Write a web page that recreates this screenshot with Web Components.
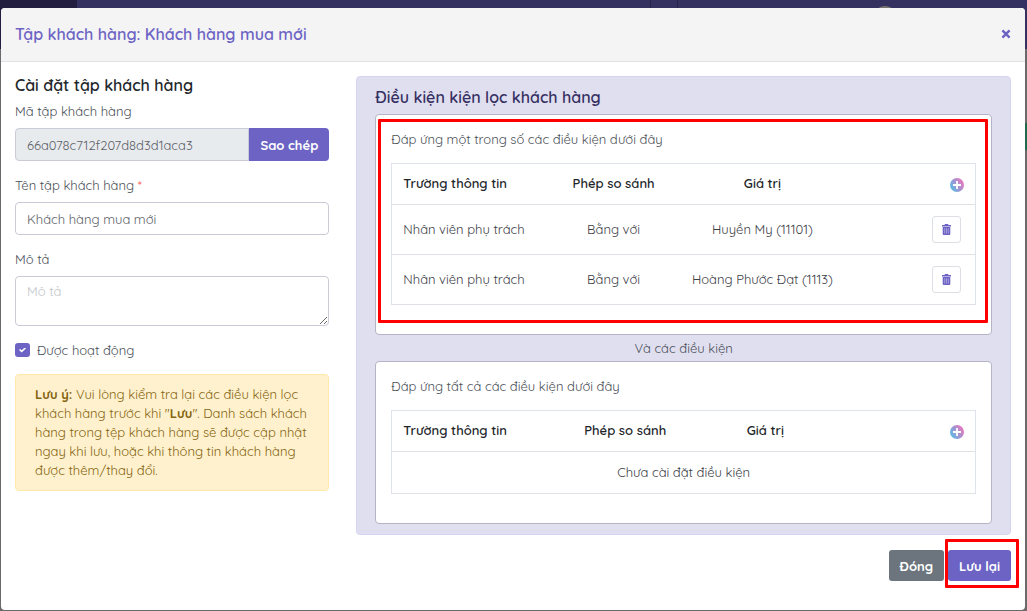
<!DOCTYPE html>
<html lang="vi">
<head>
<meta charset="utf-8">
<meta name="viewport" content="width=device-width, initial-scale=1">
<title>Tập khách hàng: Khách hàng mua mới</title>
<style>
  :root {
    --font: Quicksand, Inter, "Noto Sans", sans-serif;
    --primary: #6c63c4;
    --text: #4a4f57;
    --border: #c9cbd6;
    --mark: #ff0000;
  }
  body { margin: 0; font: 400 13px/20px var(--font); color: var(--text); }
</style>
</head>
<body>
<page-backdrop>
  <customer-dialog heading="Tập khách hàng: Khách hàng mua mới">
    <segment-settings slot="settings"></segment-settings>
    <filter-panel slot="filters" heading="Điều kiện kiện lọc khách hàng">
      <condition-group marked layout="27,22,29,22"
        heading="Đáp ứng một trong số các điều kiện dưới đây"
        rows="Nhân viên phụ trách|Bằng với|Huyền My (11101);Nhân viên phụ trách|Bằng với|Hoàng Phước Đạt (1113)"></condition-group>
      <p>Và các điều kiện</p>
      <condition-group layout="28,24,24,24"
        heading="Đáp ứng tất cả các điều kiện dưới đây"></condition-group>
    </filter-panel>
    <action-button slot="actions" tone="muted">Đóng</action-button>
    <action-button slot="actions" marked>Lưu lại</action-button>
  </customer-dialog>
</page-backdrop>

<script>
const define = (name, html, setup) => {
  const template = document.createElement('template');
  template.innerHTML = html;
  customElements.define(name, class extends HTMLElement {
    constructor() {
      super();
      this.attachShadow({ mode: 'open' }).append(template.content.cloneNode(true));
    }
    connectedCallback() {
      if (setup && !this.ready) { this.ready = true; setup(this, this.shadowRoot); }
    }
  });
};

// Dimmed page behind the dialog
define('page-backdrop', `
  <style>
    :host {
      display: block; box-sizing: border-box; min-height: 100vh; padding: 8px 2px 1px 1px;
      position: relative; overflow: hidden;
      background:
        linear-gradient(#1d6b4a, #1d6b4a) right 0 top 123px / 3px 27px no-repeat,
        linear-gradient(#26234a, #26234a) 650px 0 / 1px 8px no-repeat,
        linear-gradient(#26234a, #26234a) 677px 0 / 1px 8px no-repeat,
        linear-gradient(#211e40, #211e40) 0 0 / 77px 49px no-repeat,
        linear-gradient(#343060, #343060) 0 0 / 100% 49px no-repeat,
        #6a6a6c;
    }
    i {
      position: absolute; top: 6px; right: 131px; width: 22px; height: 22px;
      border-radius: 50%; background: #77716f;
    }
  </style>
  <i></i><slot></slot>`);

define('customer-dialog', `
  <style>
    :host { display: block; position: relative; }
    section {
      box-sizing: border-box; min-height: calc(100vh - 9px); background: #fff;
      border-radius: 4px; overflow: hidden;
    }
    header {
      display: flex; align-items: center; justify-content: space-between;
      padding: 14px 14px 15px; background: #f4f4f4; border-bottom: 1px solid #dfe1e4;
    }
    h1 { margin: 0; font-size: 16px; line-height: 24px; font-weight: 600; color: var(--primary); }
    .close {
      display: flex; padding: 0; border: 0; background: none; color: var(--primary);
      width: 10px; height: 10px;
    }
    .columns { display: grid; grid-template-columns: minmax(0, 1fr) minmax(0, 2fr); }
    .columns > div { padding: 14px; }
    .columns > div:first-child { padding-right: 13px; }
    footer { display: flex; justify-content: flex-end; gap: 4px; padding: 1px 14px 28px; }
  </style>
  <section role="dialog" aria-labelledby="title">
    <header>
      <h1 id="title"></h1>
      <button class="close" aria-label="Đóng hộp thoại">
        <svg width="10" height="10" viewBox="0 0 10 10" stroke="currentColor" stroke-width="2.4"><path d="M1.4 1.4 8.6 8.6M8.6 1.4 1.4 8.6"/></svg>
      </button>
    </header>
    <div class="columns">
      <div><slot name="settings"></slot></div>
      <div><slot name="filters"></slot></div>
    </div>
    <footer><slot name="actions"></slot></footer>
  </section>`,
  (el, root) => { root.querySelector('h1').textContent = el.getAttribute('heading'); });

define('segment-settings', `
  <style>
    :host { display: block; }
    h2 { margin: 0 0 7px; font-size: 16px; line-height: 18px; font-weight: 600; color: #23272b; }
    label { display: block; }
    b.req { color: #f66; font-weight: 400; }
    .field { display: flex; margin: 7px 0 14px; }
    input[type=text], textarea {
      box-sizing: border-box; flex: 1; min-width: 0; height: 33px; padding: 6px 11px; margin: 0;
      border: 1px solid var(--border); border-radius: 4px; background: #fff;
      font: inherit; color: #5d6168; outline: 0;
    }
    input[readonly] { background: #e8ebee; border-radius: 4px 0 0 4px; }
    textarea { height: 50px; padding-top: 4px; resize: vertical; }
    textarea::placeholder { color: #c3c5c9; }
    .field button {
      padding: 0 11px; border: 0; border-radius: 0 4px 4px 0;
      background: var(--primary); color: #fff; font: inherit; font-weight: 700;
    }
    .check { display: flex; align-items: center; gap: 7px; }
    .check input {
      appearance: none; display: grid; place-items: center; width: 15px; height: 14px; margin: 0;
      border-radius: 3px; background: var(--primary);
    }
    .check input::after {
      content: ""; width: 7px; height: 5px; background: #fff;
      clip-path: polygon(0 50%, 16% 28%, 38% 54%, 84% 0, 100% 18%, 38% 100%);
    }
    .note {
      margin: 14px 0 0; padding: 10px 19px; border: 1px solid #ffe8a8; border-radius: 4px;
      background: #fff1cd; color: #856411; line-height: 19px;
    }
    .note b { font-weight: 700; }
  </style>
  <h2>Cài đặt tập khách hàng</h2>
  <label for="code">Mã tập khách hàng</label>
  <div class="field"><input id="code" type="text" readonly value="66a078c712f207d8d3d1aca3"><button>Sao chép</button></div>
  <label for="name">Tên tập khách hàng <b class="req">*</b></label>
  <div class="field"><input id="name" type="text" value="Khách hàng mua mới"></div>
  <label for="description">Mô tả</label>
  <div class="field"><textarea id="description" placeholder="Mô tả"></textarea></div>
  <label class="check"><input type="checkbox" checked>Được hoạt động</label>
  <p class="note"><b>Lưu ý:</b> Vui lòng kiểm tra lại các điều kiện lọc khách hàng trước khi "<b>Lưu</b>". Danh sách khách hàng trong tệp khách hàng sẽ được cập nhật ngay khi lưu, hoặc khi thông tin khách hàng được thêm/thay đổi.</p>`);

define('filter-panel', `
  <style>
    :host {
      display: block; padding: 10px 18px; border: 1px solid #d6d3f3; border-radius: 4px;
      background: #e0dff0;
    }
    h2 { margin: 0 0 7px; font-size: 16px; line-height: 20px; font-weight: 600; color: #363062; }
    ::slotted(p) { margin: 3px 0; text-align: center; }
  </style>
  <h2></h2><slot></slot>`,
  (el, root) => { root.querySelector('h2').textContent = el.getAttribute('heading'); });

// One card of conditions: intro text plus a table
define('condition-group', `
  <style>
    :host {
      display: block; position: relative; padding: 14px 15px 29px;
      border: 1px solid #b5b3c6; border-radius: 4px; background: #fff;
    }
    :host([marked])::after {
      content: ""; position: absolute; inset: 4px 3px 11px 2px;
      border: 3px solid var(--mark); border-radius: 1px; pointer-events: none;
    }
    p { margin: 0 0 14px; }
    table {
      width: 100%; table-layout: fixed; border-collapse: collapse;
      border: 1px solid #dfe4ec; color: #3c4047;
    }
    th, td { box-sizing: border-box; height: 50px; padding: 0 11px 2px; text-align: center; border-bottom: 1px solid #dfe1e6; }
    th { height: 41px; font-weight: 600; color: #212529; }
    td { white-space: nowrap; }
    .empty { height: 42px; }
    th:first-child, td:first-child:not(.empty) { text-align: left; }
    th:last-child, td:last-child:not(.empty) { text-align: right; }
    td:last-child:not(.empty) { padding: 0 14px 0 0; }
    button { padding: 0; vertical-align: middle; }
    .add { border: 0; background: none; height: 14px; display: inline-flex; }
    .remove {
      display: inline-flex; align-items: center; justify-content: center;
      width: 29px; height: 27px;
      border: 1px solid #dcdfe4; border-radius: 3px; background: #fff; color: var(--primary);
    }
  </style>
  <p></p>
  <table>
    <colgroup></colgroup>
    <thead><tr><th>Trường thông tin</th><th>Phép so sánh</th><th>Giá trị</th><th>
      <button class="add" aria-label="Thêm điều kiện">
        <svg width="14" height="14" viewBox="0 0 14 14">
          <defs><linearGradient id="g" x1="0" y1="0.8" x2="1" y2="0.2"><stop offset="0.1" stop-color="#62b8e2"/><stop offset="0.5" stop-color="#a294d2"/><stop offset="0.9" stop-color="#e57ac0"/></linearGradient></defs>
          <circle cx="7" cy="7" r="7" fill="url(#g)"/><path d="M7 3v8M3 7h8" stroke="#fff" stroke-width="1.8"/>
        </svg>
      </button></th></tr></thead>
    <tbody></tbody>
  </table>`,
  (el, root) => {
    root.querySelector('p').textContent = el.getAttribute('heading');
    root.querySelector('colgroup').innerHTML =
      el.getAttribute('layout').split(',').map(w => `<col style="width:${w}%">`).join('');
    const trash = `<button class="remove" aria-label="Xóa điều kiện"><svg width="9" height="11" viewBox="0 0 9 11"><path fill="currentColor" d="M3 0h3l.6 1H9v1.4H0V1h2.4zM.7 3h7.6v7q0 1-1 1H1.700q-1 0-1-1z"/><path d="M2.700 4.200v5.400M4.500 4.200v5.400M6.300 4.200v5.400" stroke="#b9b4e6" stroke-width=".7"/></svg></button>`;
    const rows = el.getAttribute('rows');
    root.querySelector('tbody').innerHTML = rows
      ? rows.split(';').map(r => '<tr>' + r.split('|').map(c => `<td>${c}</td>`).join('') + `<td>${trash}</td></tr>`).join('')
      : '<tr><td class="empty" colspan="4">Chưa cài đặt điều kiện</td></tr>';
  });

define('action-button', `
  <style>
    :host { display: block; position: relative; }
    button {
      display: block; height: 31px; padding: 0 11px; border: 0; border-radius: 3px;
      background: var(--primary); color: #fff; font: inherit; font-weight: 700;
    }
    :host([tone=muted]) button { background: #6c757d; }
    :host([marked])::after {
      content: ""; position: absolute; inset: -11px -8px -7px -3px;
      border: 3px solid var(--mark); border-radius: 1px; pointer-events: none;
    }
  </style>
  <button><slot></slot></button>`);
</script>
</body>
</html>
